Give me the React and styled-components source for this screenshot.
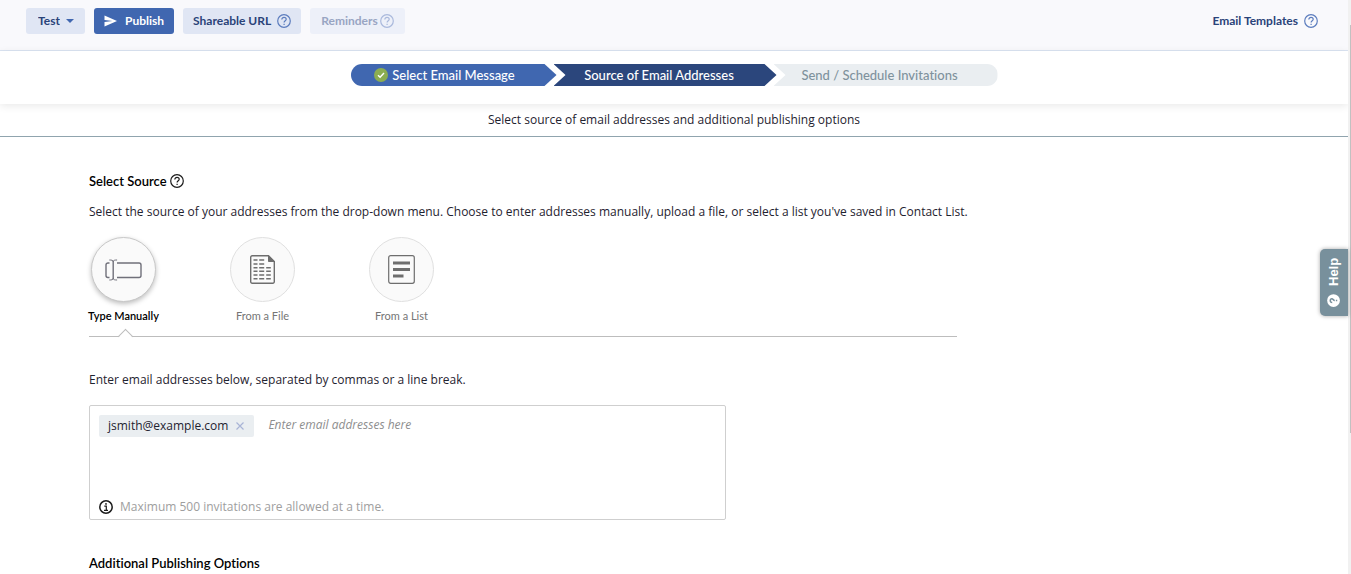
import { useState } from 'react';
import styled, { createGlobalStyle, css } from 'styled-components';

const titleFont = "Lato, 'Liberation Sans', sans-serif";

const GlobalStyle = createGlobalStyle`
  * {
    box-sizing: border-box;
  }
  body {
    margin: 0;
    background: #fff;
    color: #1f2330;
    font-family: 'Open Sans', 'Liberation Sans', sans-serif;
    font-size: 12px;
    line-height: 16px;
    font-variant-ligatures: none;
  }
  button,
  input,
  select {
    font: inherit;
    color: inherit;
  }
`;

const Page = styled.div`
  display: flex;
  height: 100vh;
  overflow: hidden;
  position: relative;
`;
const Content = styled.div`
  flex: 1;
  min-width: 0;
`;
const ScrollTrack = styled.div`
  width: 3px;
  padding: 25px 0 0 2px;
  background: #f1f1f1;
`;
const ScrollThumb = styled.div`
  height: 408px;
  background: #c1c1c1;
`;

const Toolbar = styled.header`
  display: flex;
  justify-content: space-between;
  align-items: flex-start;
  height: 51px;
  padding: 8px 30px 0 26px;
  background: #f9f9fc;
  border-bottom: 1px solid #dbe4f2;
  font-family: ${titleFont};
  font-weight: 700;
  color: #2a4379;
`;
const Actions = styled.div`
  display: flex;
  gap: 9px;
`;
const barItem = css`
  display: flex;
  align-items: center;
  height: 26px;
  border: none;
  border-radius: 3px;
`;
const SurveyPicker = styled.div`
  ${barItem}
  gap: 6px;
  padding: 0 11px 0 12px;
  background: #e0e6f4;
`;
const Select = styled.select`
  appearance: none;
  border: none;
  padding: 0;
  background: transparent;
  outline: none;
`;
const BarButton = styled.button`
  ${barItem}
  gap: ${({ $gap }) => $gap || 6}px;
  padding: 0 ${({ $padX }) => $padX || 10}px;
  background: ${({ $primary }) => ($primary ? '#4067b0' : '#e0e6f4')};
  color: ${({ $primary }) => ($primary ? '#fff' : '#2a4379')};
  cursor: pointer;
  &:disabled {
    background: #edf0f9;
    color: #99a5c3;
    cursor: default;
  }
`;
const TemplatesLink = styled.a`
  ${barItem}
  gap: 6px;
  color: inherit;
  text-decoration: none;
`;

const StepBar = styled.nav`
  display: flex;
  justify-content: center;
  height: 53px;
  padding-top: 13px;
  box-shadow: 0 2px 8px rgba(0, 0, 0, 0.09);
`;
const Steps = styled.ol`
  display: flex;
  margin: 0;
  padding: 0;
  list-style: none;
`;
const stepLook = {
  done: css`
    width: 206px;
    padding-right: 18px;
    gap: 4px;
    background: #4067b0;
    color: #fff;
    border-radius: 11px 0 0 11px;
    clip-path: polygon(0 0, 194px 0, 100% 50%, 194px 100%, 0 100%);
  `,
  current: css`
    width: 223px;
    padding-right: 12px;
    background: #2b467c;
    color: #fff;
    clip-path: polygon(0 0, 211px 0, 100% 50%, 211px 100%, 0 100%, 12px 50%);
  `,
  next: css`
    width: 224px;
    padding-right: 12px;
    background: #eaeef1;
    color: #7f929d;
    border-radius: 0 11px 11px 0;
    clip-path: polygon(0 0, 100% 0, 100% 100%, 0 100%, 12px 50%);
  `,
};
const Step = styled.li`
  display: flex;
  align-items: center;
  justify-content: center;
  height: 22px;
  padding-bottom: 1px;
  font-family: ${titleFont};
  font-size: 13px;
  font-weight: 500;
  ${({ $state }) => stepLook[$state]}
  & + & {
    margin-left: -3px;
  }
`;
const Subtitle = styled.p`
  margin: 0;
  padding: 8px 0;
  border-bottom: 1px solid #90a4ae;
  text-align: center;
`;

const Main = styled.main`
  padding: 36px 89px 0;
`;
const Heading = styled.h2`
  display: flex;
  align-items: center;
  gap: 3px;
  margin: 0;
  font-family: ${titleFont};
  font-size: 13px;
  font-weight: 600;
  color: #000;
`;
const Intro = styled.p`
  margin: 15px 0 17px;
`;
const Sources = styled.div`
  display: flex;
  gap: 70px;
  max-width: 868px;
  height: 100px;
  border-bottom: 1px solid #bdbdbd;
`;
const Circle = styled.span`
  display: flex;
  align-items: center;
  justify-content: center;
  width: 65px;
  height: 65px;
  border: 1px solid #e0e0e0;
  border-radius: 50%;
  background: #fafafa;
`;
const Source = styled.button`
  position: relative;
  display: flex;
  flex-direction: column;
  align-items: center;
  gap: 6px;
  width: 69px;
  padding: 0;
  border: none;
  background: none;
  font-family: ${titleFont};
  font-size: 11px;
  white-space: nowrap;
  color: #757575;
  cursor: pointer;
  ${({ $active }) =>
    $active &&
    css`
      color: #000;
      font-weight: 600;
      ${Circle} {
        border-color: #c8c8c8;
        box-shadow: 0 2px 5px rgba(0, 0, 0, 0.26);
      }
      &::after {
        content: '';
        position: absolute;
        bottom: -6px;
        left: 31px;
        width: 10px;
        height: 10px;
        border: solid #bdbdbd;
        border-width: 1px 0 0 1px;
        background: linear-gradient(135deg, #fff 50%, transparent 50%);
        transform: rotate(45deg);
      }
    `}
`;

const Label = styled.label`
  display: block;
  margin: 35px 0 17px;
`;
const AddressBox = styled.div`
  display: flex;
  flex-direction: column;
  justify-content: space-between;
  max-width: 637px;
  height: 115px;
  padding: 9px 9px 4px;
  border: 1px solid #cfcfcf;
  border-radius: 2px;
`;
const Entries = styled.div`
  display: flex;
  gap: 14px;
`;
const Chip = styled.span`
  display: flex;
  align-items: center;
  gap: 8px;
  height: 22px;
  padding: 0 10px 0 9px;
  border-radius: 2px;
  background: #eaeef1;
`;
const Remove = styled.button`
  display: flex;
  padding: 0;
  border: none;
  background: none;
  cursor: pointer;
`;
const AddressInput = styled.input`
  flex: 1;
  height: 18px;
  padding: 0;
  border: none;
  outline: none;
  &::placeholder {
    color: #8e8e8e;
    font-style: italic;
    opacity: 1;
  }
`;
const Note = styled.div`
  display: flex;
  align-items: center;
  gap: 7px;
  color: #9e9e9e;
`;
const Options = styled.section`
  margin-top: 35px;
`;

const HelpTab = styled.button`
  position: absolute;
  top: 249px;
  right: 3px;
  display: flex;
  align-items: center;
  gap: 8px;
  width: 28px;
  height: 67px;
  padding: 9px 6px;
  border: none;
  border-radius: 0 5px 5px 0;
  background: #78909c;
  box-shadow: 0 0 4px rgba(0, 0, 0, 0.35);
  color: #fff;
  font: bold 13px/16px 'Liberation Sans', Arial, sans-serif;
  writing-mode: vertical-rl;
  transform: rotate(180deg);
  cursor: pointer;
`;

const QuestionIcon = ({ color }) => (
  <svg width="14" height="14" viewBox="0 0 14 14" fill="none" stroke={color} strokeWidth="1.2">
    <circle cx="7" cy="7" r="6.3" />
    <path d="M4.800 5.500C4.800 4.200 5.800 3.400 7 3.400s2.200.7 2.200 1.900C9.200 6.800 7.100 6.800 7.100 8.600" />
    <path d="M7.100 9.700v1.300" />
  </svg>
);

const CheckIcon = () => (
  <svg width="14" height="14" viewBox="0 0 14 14">
    <circle cx="7" cy="7" r="7" fill="#8bad51" />
    <path d="M4 7.200l2.100 2.100L10 5" fill="none" stroke="#fff" strokeWidth="1.400" />
  </svg>
);

const InfoIcon = () => (
  <svg width="14" height="14" viewBox="0 0 14 14" fill="none" stroke="#1c1c1c">
    <circle cx="7" cy="7" r="6.200" strokeWidth="1.500" />
    <path d="M5.300 6.200h2v3.900M5 10.300h4" strokeWidth="1.200" />
    <circle cx="7" cy="3.900" r=".9" fill="#1c1c1c" stroke="none" />
  </svg>
);

const TypeIcon = () => (
  <svg width="37" height="22" viewBox="0 0 37 22" fill="none" stroke="#70707a" strokeWidth="1.400">
    <path d="M4.500 4H3a2 2 0 0 0-2 2v10.500a2 2 0 0 0 2 2h1.500" />
    <path d="M12 4h22a2 2 0 0 1 2 2v10.500a2 2 0 0 1-2 2H12" />
    <path d="M8.200 2v18" />
    <path
      d="M4.300 1C6.500 1 8.200 1.200 8.200 2.600 8.200 1.200 10 1 12.100 1M4.300 21c2.200 0 3.900-.2 3.900-1.600 0 1.400 1.800 1.600 3.900 1.600"
      strokeWidth="1"
    />
  </svg>
);

const fileRows = [
  { y: 5, short: true },
  { y: 9, short: true },
  { y: 12.7 },
  { y: 16.3 },
  { y: 20 },
  { y: 23.7 },
];
const FileIcon = () => (
  <svg width="25" height="29" viewBox="0 0 25 29" fill="none" stroke="#6e6e6e">
    <path
      d="M18.500.7H2.200A1.500 1.500 0 0 0 .7 2.200v24.600a1.500 1.500 0 0 0 1.500 1.500h20.600a1.500 1.500 0 0 0 1.500-1.500V6.500z"
      strokeWidth="1.400"
    />
    <path d="M18.500.7v5.800h5.800z" fill="#6e6e6e" />
    {fileRows.map(({ y, short }) => (
      <path
        key={y}
        d={`M3.500 ${y}h4M9.200 ${y}h5${short ? '' : `M16.200 ${y}h4.600`}`}
        strokeWidth="1.500"
      />
    ))}
  </svg>
);

const ListIcon = () => (
  <svg width="27" height="29" viewBox="0 0 27 29" fill="none" stroke="#6e6e6e">
    <rect x=".7" y=".7" width="25.600" height="27.600" rx="2" strokeWidth="1.200" />
    <path d="M5 8h17M5 14.500h17M5 21h10.500" strokeWidth="2.800" />
  </svg>
);

const sources = [
  { name: 'Type Manually', Icon: TypeIcon },
  { name: 'From a File', Icon: FileIcon },
  { name: 'From a List', Icon: ListIcon },
];

const App = () => {
  const [source, setSource] = useState('Type Manually');
  const [emails, setEmails] = useState(['jsmith@example.com']);

  return (
    <Page>
      <GlobalStyle />
      <Content>
        <Toolbar>
          <Actions>
            <SurveyPicker>
              <Select aria-label="Survey">
                <option>Test</option>
              </Select>
              <svg width="8" height="4" viewBox="0 0 8 4">
                <path d="M0 0h8L4 4z" fill="#4067b0" />
              </svg>
            </SurveyPicker>
            <BarButton $primary $gap={8}>
              <svg width="13" height="12" viewBox="0 0 13 12">
                <path d="M.500.500L13 6 .500 11.500V7L8.500 6 .500 5z" fill="#fff" />
              </svg>
              Publish
            </BarButton>
            <BarButton>
              Shareable URL
              <QuestionIcon color="#5c7dbe" />
            </BarButton>
            <BarButton disabled $gap={2} $padX={11}>
              Reminders
              <QuestionIcon color="#aab9dc" />
            </BarButton>
          </Actions>
          <TemplatesLink href="#templates">
            Email Templates
            <QuestionIcon color="#5c7dbe" />
          </TemplatesLink>
        </Toolbar>
        <StepBar>
          <Steps>
            <Step $state="done">
              <CheckIcon />
              Select Email Message
            </Step>
            <Step $state="current" aria-current="step">
              Source of Email Addresses
            </Step>
            <Step $state="next">Send / Schedule Invitations</Step>
          </Steps>
        </StepBar>
        <Subtitle>
          Select source of email addresses and additional publishing options
        </Subtitle>
        <Main>
          <Heading>
            Select Source
            <QuestionIcon color="#1c1c1c" />
          </Heading>
          <Intro>
            Select the source of your addresses from the drop-down menu. Choose
            to enter addresses manually, upload a file, or select a list you've
            saved in Contact List.
          </Intro>
          <Sources>
            {sources.map(({ name, Icon }) => (
              <Source
                key={name}
                $active={name === source}
                aria-pressed={name === source}
                onClick={() => setSource(name)}
              >
                <Circle>
                  <Icon />
                </Circle>
                {name}
              </Source>
            ))}
          </Sources>
          <Label htmlFor="addresses">
            Enter email addresses below, separated by commas or a line break.
          </Label>
          <AddressBox>
            <Entries>
              {emails.map((email) => (
                <Chip key={email}>
                  {email}
                  <Remove
                    aria-label={`Remove ${email}`}
                    onClick={() => setEmails(emails.filter((e) => e !== email))}
                  >
                    <svg width="8" height="8" viewBox="0 0 8 8">
                      <path d="M.500.500l7 7M7.500.500l-7 7" stroke="#a9b4d6" strokeWidth="1.200" />
                    </svg>
                  </Remove>
                </Chip>
              ))}
              <AddressInput id="addresses" placeholder="Enter email addresses here" />
            </Entries>
            <Note>
              <InfoIcon />
              Maximum 500 invitations are allowed at a time.
            </Note>
          </AddressBox>
          <Options>
            <Heading>Additional Publishing Options</Heading>
          </Options>
        </Main>
      </Content>
      <ScrollTrack>
        <ScrollThumb />
      </ScrollTrack>
      <HelpTab>
        <svg width="13" height="13" viewBox="0 0 12 12" transform="rotate(90)">
          <circle cx="6" cy="6" r="6" fill="#fff" />
          <path
            d="M4.200 4.800C4.200 3.600 5 3 6 3s1.800.6 1.800 1.500C7.800 5.700 6 5.700 6 7.200M6 8.200v1.300"
            fill="none"
            stroke="#78909c"
            strokeWidth="1.400"
          />
        </svg>
        Help
      </HelpTab>
    </Page>
  );
};

export default App;
